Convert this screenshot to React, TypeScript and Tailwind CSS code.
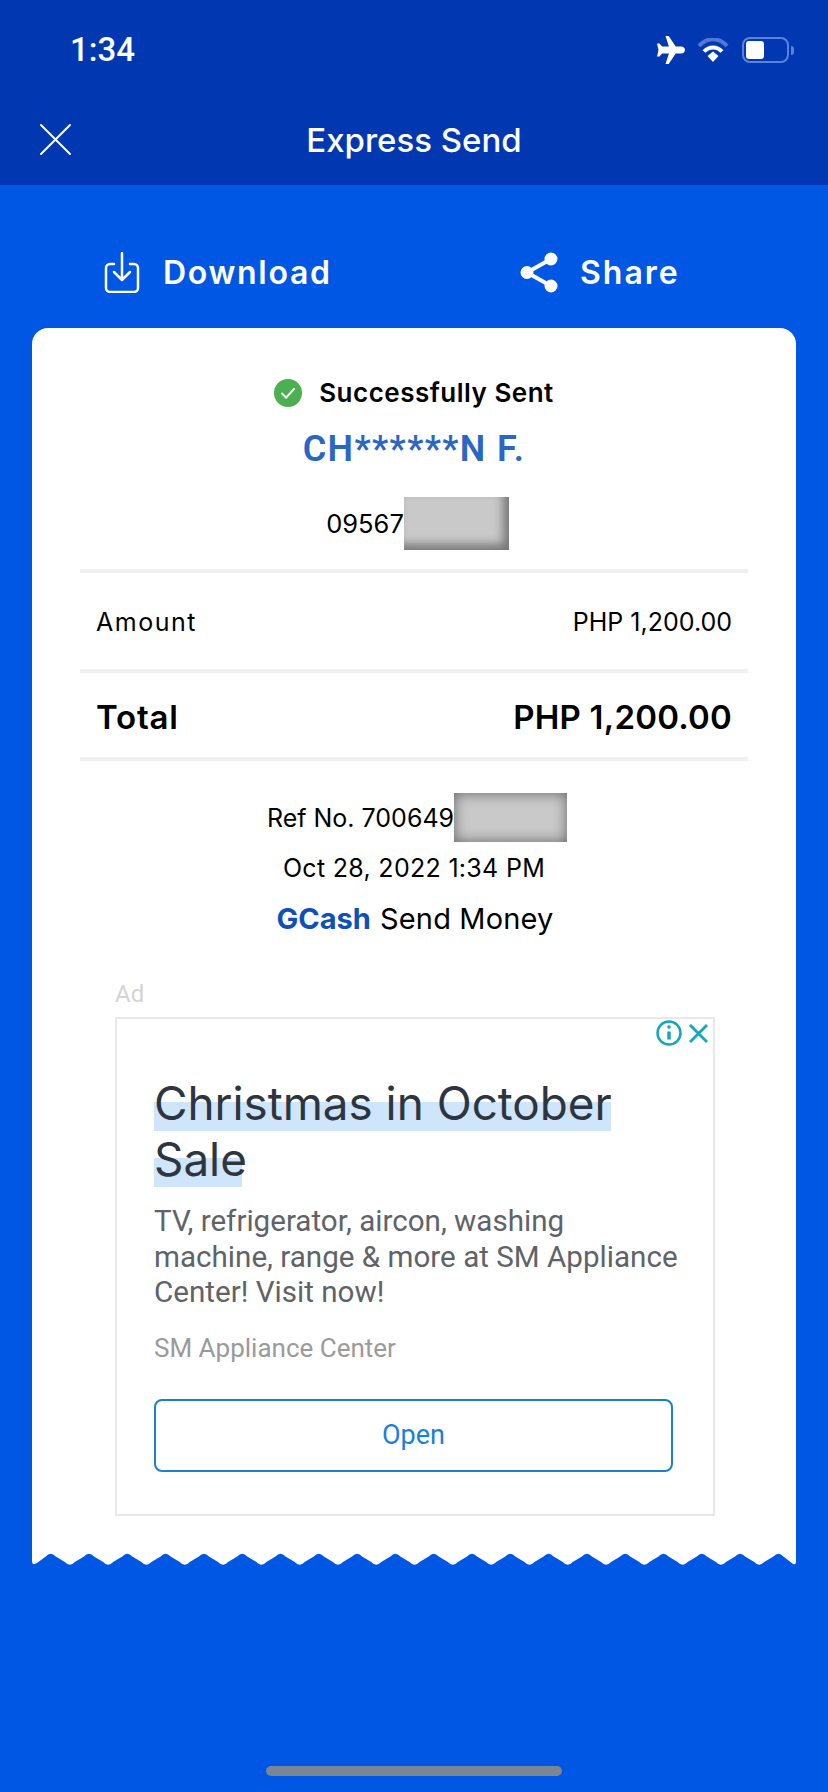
const FONT = "font-['Inter','Noto_Sans',sans-serif]";

// ─── Receipt bottom edge ─────────────────────────────────────
function tornEdgePath() {
  const width = 764;
  const period = 38.3;
  let d = `M0 0H${width}V12`;
  d += `Q${width} 15 ${width - 3} 14`;
  for (let i = 19; i >= 0; i--) {
    const peak = 18.7 + period * i;
    const tip = peak - period / 2;
    d += `L${peak + 5} 6.5Q${peak} 1 ${peak - 5} 6.5`;
    if (i > 0) d += `L${tip + 5} 12Q${tip} 17.5 ${tip - 5} 12`;
  }
  d += "L5 13Q0 16 0 11Z";
  return d;
}

function Redacted({ className }: { className: string }) {
  return <span className={`block shrink-0 ${className}`} />;
}

export default function App() {
  return (
    <div className={`flex h-[1792px] w-[828px] flex-col overflow-hidden bg-[#0057e4] ${FONT}`}>
      {/* Header */}
      <header className="h-[185px] shrink-0 bg-[#0138b1] text-white">
        <div className="flex h-[100px] items-start justify-between pl-[70px] pr-[34px] pt-[31px]">
          <span className="font-['Roboto',sans-serif] text-[33px] font-medium leading-[38px]">1:34</span>
          <div className="mt-[5px] flex items-center">
            <svg width="30" height="28" viewBox="0 0 30 28" fill="#fff">
              <path d="M10.5 0h3.2l7 10.6h5.4c2.2 0 3.9 1.5 3.9 3.4s-1.7 3.400-3.900 3.400h-5.400l-7 10.600h-3.200l3.400-10.600h-6.800l-2.600 3.200h-2.500l1.500-6.600-1.500-6.600h2.500l2.600 3.200h6.800z" />
            </svg>
            <svg className="ml-[12px]" width="32" height="24" viewBox="0 0 32 24" fill="none" strokeLinecap="butt">
              <path d="M2 8C10-1 22-1 30 8" stroke="#4f79d4" strokeWidth="4" />
              <path d="M7 13.500C12 8 20 8 25 13.500" stroke="#fff" strokeWidth="4" />
              <path d="M10.500 18l5.500-4.500 5.500 4.500-5.500 6z" fill="#fff" />
            </svg>
            <div className="ml-[13px] flex items-center">
              <div className="h-[26px] w-[47px] rounded-[8px] border-2 border-[#5b83da] p-[2px]">
                <div className="h-full w-[18px] rounded-[3px] bg-white" />
              </div>
              <div className="ml-[2px] h-[9px] w-[3px] rounded-r-full bg-[#5b83da]" />
            </div>
          </div>
        </div>
        <div className="relative flex h-[80px] items-center justify-center">
          <svg className="absolute left-[39px] top-[23px]" width="33" height="33" viewBox="0 0 33 33" stroke="#fff" strokeWidth="2" strokeLinecap="round">
            <path d="M2 2l29 29M31 2L2 31" />
          </svg>
          <span className="text-[33px] font-medium leading-[40px]">Express Send</span>
        </div>
      </header>

      {/* Actions */}
      <div className="flex h-[143px] shrink-0 items-center pl-[104px] pt-[32px] text-white">
        <svg width="36" height="41" viewBox="0 0 36 41" fill="none" stroke="#fff" strokeWidth="2.500" strokeLinecap="round" strokeLinejoin="round">
          <path d="M10 12H6a4 4 0 0 0-4 4v20a4 4 0 0 0 4 4h24a4 4 0 0 0 4-4V16a4 4 0 0 0-4-4h-4" />
          <path d="M18 1v27M10 20l8 8 8-8" />
        </svg>
        <span className="ml-[23px] w-[190px] text-[32px] font-semibold leading-[40px] tracking-[1.700px]">Download</span>
        <svg className="ml-[167px]" width="38" height="41" viewBox="0 0 38 41" fill="#fff" stroke="#fff" strokeWidth="4">
          <circle cx="31" cy="7" r="4.500" />
          <circle cx="7" cy="20.500" r="4.500" />
          <circle cx="31" cy="34" r="4.500" />
          <path d="M31 7L7 20.500 31 34" fill="none" />
        </svg>
        <span className="ml-[22px] text-[32px] font-semibold leading-[40px] tracking-[2px]">Share</span>
      </div>

      {/* Receipt */}
      <main className="mx-[32px] shrink-0">
        <div className="flex flex-col items-center rounded-t-[16px] bg-white pt-[49px] text-black">
          <div className="flex h-[32px] items-center">
            <svg width="28" height="28" viewBox="0 0 28 28">
              <circle cx="14" cy="14" r="14" fill="#4caf50" />
              <path d="M8 14.500l4.200 4.200L20 10" fill="none" stroke="#fff" strokeWidth="2" strokeLinecap="round" strokeLinejoin="round" />
            </svg>
            <span className="ml-[17px] text-[26px] font-semibold leading-[32px] tracking-[0.500px]">Successfully Sent</span>
          </div>
          <div className="mt-[16px] flex h-[48px] items-center font-['Roboto',sans-serif] text-[36px] font-semibold leading-[48px] tracking-[1.400px] text-[#2a66c4]">
            CH******N F.
          </div>
          <div className="mt-[24px] flex h-[53px] items-center pl-[7px]">
            <span className="text-[25.5px] leading-[32px]">09567</span>
            <Redacted className="h-[53px] w-[105px] bg-[#c9c9c9] shadow-[inset_-6px_-6px_10px_rgba(0,0,0,0.4)]" />
          </div>

          <div className="mt-[19px] h-[4px] w-[668px] bg-[#f0f0f0]" />
          <div className="flex h-[96px] w-[668px] items-center justify-between px-[16px] pt-[2px] text-[25px] leading-[32px]">
            <span className="tracking-[1.500px]">Amount</span>
            <span>PHP 1,200.00</span>
          </div>
          <div className="h-[4px] w-[668px] bg-[#f0f0f0]" />
          <div className="flex h-[84px] w-[668px] items-center justify-between px-[16px] pt-[4px] text-[33px] font-semibold leading-[40px]">
            <span className="tracking-[0.800px]">Total</span>
            <span className="tracking-[0.200px]">PHP 1,200.00</span>
          </div>
          <div className="h-[4px] w-[668px] bg-[#f0f0f0]" />

          <div className="mt-[32px] flex h-[49px] items-center pl-[6px]">
            <span className="text-[25px] leading-[32px]">Ref No. 700649</span>
            <Redacted className="h-[49px] w-[113px] bg-[#c9c9c9] shadow-[inset_0_0_14px_rgba(0,0,0,0.5)]" />
          </div>
          <div className="mt-[1px] h-[50px] text-[25px] leading-[50px] tracking-[0.300px]">Oct 28, 2022 1:34 PM</div>
          <div className="h-[52px] pl-[2px] text-[29px] leading-[52px]">
            <span className="font-bold text-[#0e50b8]">GCash</span> <span className="ml-[1px] tracking-[0.150px]">Send Money</span>
          </div>

          {/* Ad */}
          <div className="ml-[2px] mt-[31px] w-[600px]">
            <div className="h-[36px] font-['Roboto',sans-serif] text-[24px] leading-[36px] text-[#d4d4d4]">Ad</div>
            <div className="relative mt-[5px] h-[499px] border-2 border-[#e8e8e8] pl-[37px] pt-[57px] font-['Roboto',sans-serif]">
              <div className="absolute right-[5px] top-[1px] flex items-center">
                <svg width="26" height="26" viewBox="0 0 26 26" fill="none" stroke="#12a8b8" strokeWidth="2.500">
                  <circle cx="13" cy="13" r="11.500" />
                  <path d="M13 11.500v8" strokeWidth="3.500" />
                  <circle cx="13" cy="7" r="1.800" fill="#12a8b8" stroke="none" />
                </svg>
                <svg className="ml-[7px]" width="19" height="19" viewBox="0 0 19 19" stroke="#12a8b8" strokeWidth="2.800">
                  <path d="M1 1l17 17M18 1L1 18" />
                </svg>
              </div>
              <div className={`text-[45.8px] leading-[56px] text-[#2d3640] ${FONT}`}>
                <div className="w-[457px] whitespace-nowrap bg-[linear-gradient(transparent_26px,#cfe5fb_26px,#cfe5fb_55px,transparent_55px)]">Christmas in October</div>
                <div className="w-[88px] bg-[linear-gradient(transparent_26px,#cfe5fb_26px,#cfe5fb_55px,transparent_55px)]">Sale</div>
              </div>
              <div className="mt-[16px] w-[528px] text-[29.6px] leading-[35.500px] text-[#5f6368]">
                TV, refrigerator, aircon, washing machine, range &amp; more at SM Appliance Center! Visit now!
              </div>
              <div className="mt-[21px] text-[26px] leading-[32px] text-[#9a9a9a]">SM Appliance Center</div>
              <button className="mt-[35px] flex h-[73px] w-[519px] items-center justify-center rounded-[8px] border-2 border-[#1c7fd0] text-[27px] text-[#1a7fdc]">
                Open
              </button>
            </div>
          </div>
          <div className="h-[34px]" />
        </div>
        <svg className="block" width="764" height="18" viewBox="0 0 764 18" fill="#fff">
          <path d={tornEdgePath()} />
        </svg>
      </main>

      {/* Home indicator */}
      <div className="mx-auto mb-[16px] mt-auto h-[10px] w-[296px] shrink-0 rounded-full bg-[#7c8594]" />
    </div>
  );
}
